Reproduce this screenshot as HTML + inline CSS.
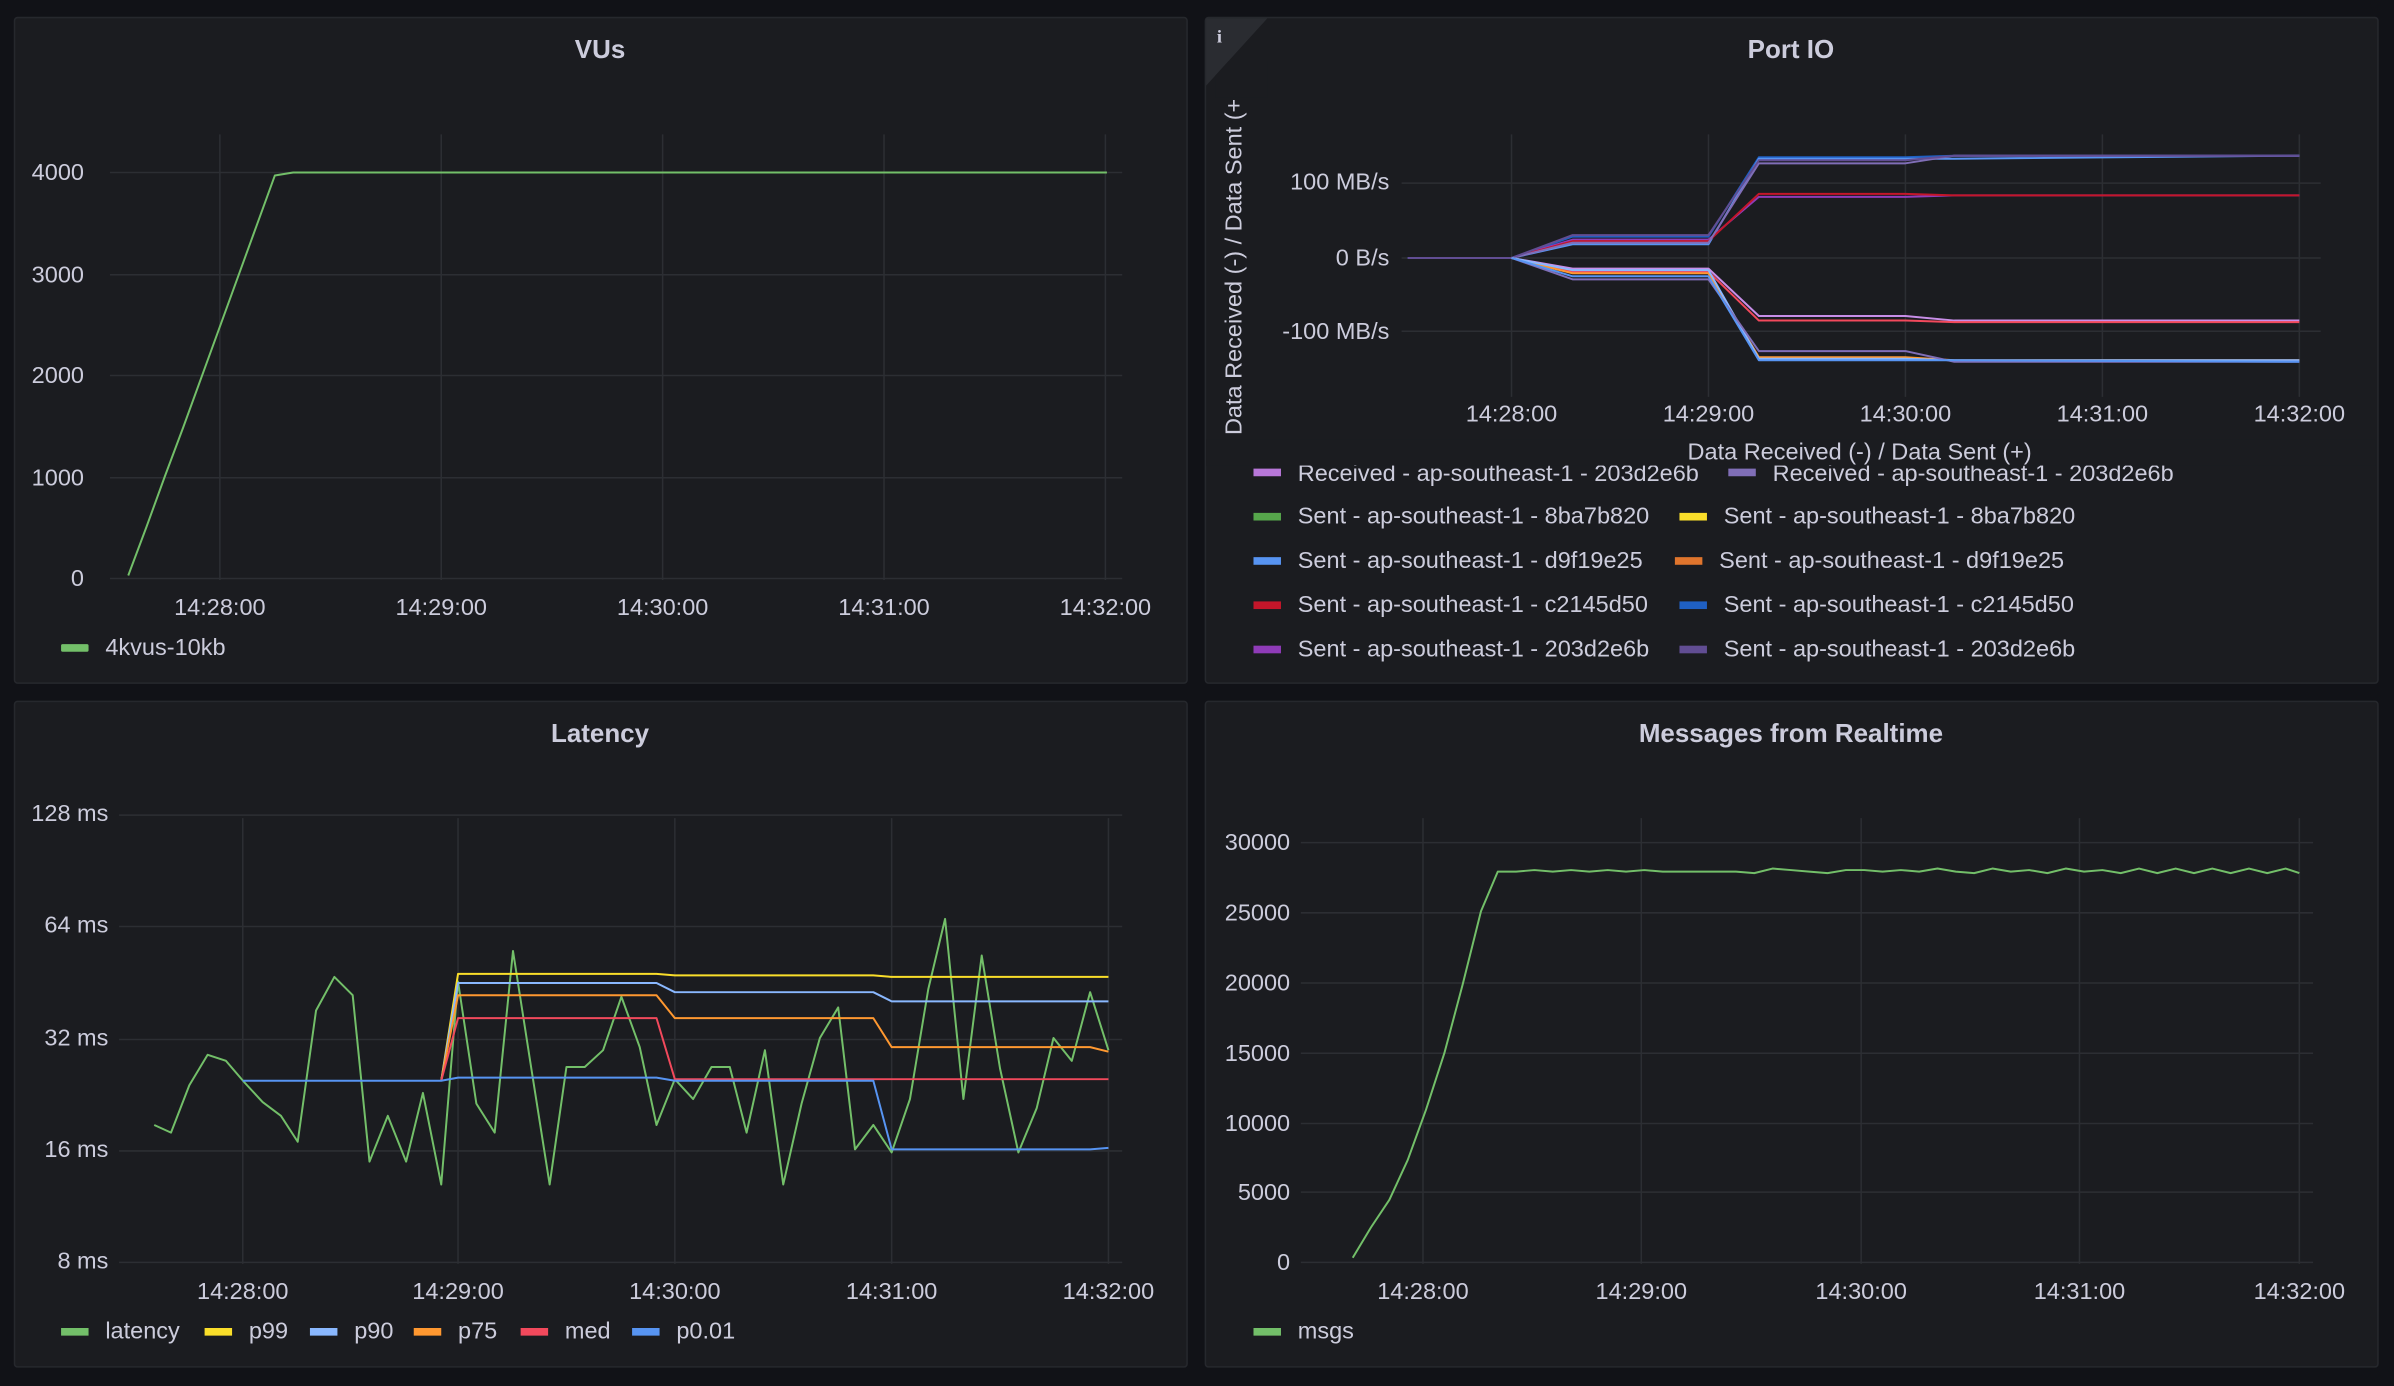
<!DOCTYPE html>
<html><head><meta charset="utf-8"><style>
html,body{margin:0;padding:0;background:#111217;}
svg{display:block}
text{font-family:"Liberation Sans",sans-serif;fill:#ccccdc;}
.t{font-size:17px;font-weight:bold;text-anchor:middle}
.a{font-size:15.4px}
.r{text-anchor:end}
.m{text-anchor:middle}
.g{stroke:#2c2e33;stroke-width:1;fill:none}
.l{fill:none;stroke-width:1.3;stroke-linejoin:round}
</style></head><body>
<svg width="2394" height="1386" viewBox="0 0 1568 908" preserveAspectRatio="none" xmlns="http://www.w3.org/2000/svg">
<rect width="1568" height="908" fill="#111217"/>
<g fill="#1b1c20" stroke="#26282d">
<rect x="9.5" y="11.5" width="768" height="436" rx="2"/>
<rect x="789.5" y="11.5" width="768" height="436" rx="2"/>
<rect x="9.5" y="459.5" width="768" height="436" rx="2"/>
<rect x="789.5" y="459.5" width="768" height="436" rx="2"/>
</g>

<!-- VUs -->
<text class="t" x="393" y="38">VUs</text>
<g class="g">
<path d="M144 88V380M289 88V380M434 88V380M579 88V380M724 88V380"/>
<path d="M72 113H735M72 180H735M72 246H735M72 313H735M72 379H735"/>
</g>
<g class="a">
<text class="r" x="55" y="118">4000</text><text class="r" x="55" y="185">3000</text>
<text class="r" x="55" y="251">2000</text><text class="r" x="55" y="318">1000</text>
<text class="r" x="55" y="384">0</text>
<text class="m" x="144" y="403">14:28:00</text><text class="m" x="289" y="403">14:29:00</text>
<text class="m" x="434" y="403">14:30:00</text><text class="m" x="579" y="403">14:31:00</text>
<text class="m" x="724" y="403">14:32:00</text>
</g>
<path class="l" stroke="#73bf69" d="M84 377L96 345L108 312L120 280L132 247L144 214L156 181L168 148L180 115L192 113L725 113"/>
<rect x="40" y="422" width="18" height="5" rx="1" fill="#73bf69"/>
<text class="a" x="69" y="429">4kvus-10kb</text>

<!-- Port IO -->
<path d="M790 12H830L790 56Z" fill="#2a2c31"/>
<text x="797" y="28" style="font-size:12px;font-weight:bold;font-family:'Liberation Serif',serif">i</text>
<text class="t" x="1173" y="38">Port IO</text>
<g class="g">
<path d="M990 88V260M1119 88V260M1248 88V260M1377 88V260M1506 88V260"/>
<path d="M918 120H1520M918 169H1520M918 217H1520"/>
</g>
<g class="a">
<text class="r" x="910" y="124">100 MB/s</text><text class="r" x="910" y="174">0 B/s</text>
<text class="r" x="910" y="222">-100 MB/s</text>
<text class="m" x="990" y="276">14:28:00</text><text class="m" x="1119" y="276">14:29:00</text>
<text class="m" x="1248" y="276">14:30:00</text><text class="m" x="1377" y="276">14:31:00</text>
<text class="m" x="1506" y="276">14:32:00</text>
<text transform="translate(813,285) rotate(-90)">Data Received (-) / Data Sent (+</text>
</g>
<rect x="796" y="40" width="34" height="24" fill="#1b1c20"/>
<path d="M790 12H830L790 56Z" fill="#2a2c31"/>
<text x="797" y="28" style="font-size:12px;font-weight:bold;font-family:'Liberation Serif',serif">i</text>
<g class="l">
<path stroke="#1f60c4" d="M922 169H990L1030 155H1119L1152 103H1248L1280 102H1506"/>
<path stroke="#5794f2" d="M990 169L1030 160H1119L1152 104H1280L1506 102"/>
<path stroke="#8f3bb8" d="M990 169L1030 157H1119L1152 129H1248L1280 128H1506"/>
<path stroke="#c4162a" d="M990 169L1030 158H1119L1152 127H1248L1280 128H1506"/>
<path stroke="#806eb7" d="M990 169L1030 159H1119L1152 107H1248L1280 102H1506"/>
<path stroke="#614d93" d="M922 169H990L1030 154H1119L1152 105H1248L1280 102H1506"/>
<path stroke="#c88ee8" d="M990 169L1030 176H1119L1152 207H1248L1280 210H1506"/>
<path stroke="#f2495c" d="M990 169L1030 178H1119L1152 210H1248L1280 211H1506"/>
<path stroke="#ff9830" d="M990 169L1030 179H1119L1152 234H1248L1280 236H1506"/>
<path stroke="#8ab8ff" d="M990 169L1030 177H1119L1152 235H1248L1280 236H1506"/>
<path stroke="#806eb7" d="M990 169L1030 183H1119L1152 230H1248L1280 237H1506"/>
<path stroke="#5794f2" d="M990 169L1030 181H1119L1152 236H1280L1506 237"/>
</g>
<g class="a">
<rect x="821" y="307" width="18" height="5" fill="#b877d9"/><text x="850" y="315">Received - ap-southeast-1 - 203d2e6b</text>
<rect x="1132" y="307" width="18" height="5" fill="#806eb7"/><text x="1161" y="315">Received - ap-southeast-1 - 203d2e6b</text>
<rect x="821" y="336" width="18" height="5" fill="#56a64b"/><text x="850" y="343">Sent - ap-southeast-1 - 8ba7b820</text>
<rect x="1100" y="336" width="18" height="5" fill="#fade2a"/><text x="1129" y="343">Sent - ap-southeast-1 - 8ba7b820</text>
<rect x="821" y="365" width="18" height="5" fill="#5794f2"/><text x="850" y="372">Sent - ap-southeast-1 - d9f19e25</text>
<rect x="1097" y="365" width="18" height="5" fill="#e0752d"/><text x="1126" y="372">Sent - ap-southeast-1 - d9f19e25</text>
<rect x="821" y="394" width="18" height="5" fill="#c4162a"/><text x="850" y="401">Sent - ap-southeast-1 - c2145d50</text>
<rect x="1100" y="394" width="18" height="5" fill="#1f60c4"/><text x="1129" y="401">Sent - ap-southeast-1 - c2145d50</text>
<rect x="821" y="423" width="18" height="5" fill="#8f3bb8"/><text x="850" y="430">Sent - ap-southeast-1 - 203d2e6b</text>
<rect x="1100" y="423" width="18" height="5" fill="#614d93"/><text x="1129" y="430">Sent - ap-southeast-1 - 203d2e6b</text>
</g>
<rect x="790" y="288" width="766" height="17" fill="#1b1c20"/>
<text class="a m" x="1218" y="301">Data Received (-) / Data Sent (+)</text>

<!-- Latency -->
<text class="t" x="393" y="486">Latency</text>
<g class="g">
<path d="M159 536V828M300 536V828M442 536V828M584 536V828M726 536V828"/>
<path d="M78 534H735M78 607H735M78 681H735M78 754H735M78 827H735"/>
</g>
<g class="a">
<text class="r" x="71" y="538">128 ms</text><text class="r" x="71" y="611">64 ms</text>
<text class="r" x="71" y="685">32 ms</text><text class="r" x="71" y="758">16 ms</text>
<text class="r" x="71" y="831">8 ms</text>
<text class="m" x="159" y="851">14:28:00</text><text class="m" x="300" y="851">14:29:00</text>
<text class="m" x="442" y="851">14:30:00</text><text class="m" x="584" y="851">14:31:00</text>
<text class="m" x="726" y="851">14:32:00</text>
</g>
<g class="l">
<path stroke="#73bf69" d="M101 737L112 742L124 711L136 691L148 695L160 709L172 722L184 731L195 748L207 662L219 640L231 652L242 761L254 731L266 761L277 716L289 776L300 643L312 723L324 742L336 623L348 700L360 776L371 699L383 699L395 688L407 653L419 686L430 737L442 707L454 720L466 699L478 699L489 742L501 688L513 776L525 723L537 680L549 660L560 753L572 737L584 755L596 720L608 648L619 602L631 720L643 626L655 700L667 755L679 726L690 680L702 695L714 650L726 688"/>
<path stroke="#fade2a" d="M289 708L300 638H430L442 639H572L584 640H726"/>
<path stroke="#8ab8ff" d="M289 708L300 644H430L442 650H572L584 656H726"/>
<path stroke="#ff9830" d="M289 708L300 652H430L442 667H572L584 686H714L726 689"/>
<path stroke="#f2495c" d="M289 708L300 667H430L442 707H726"/>
<path stroke="#5794f2" d="M159 708H289L300 706H430L442 708H572L584 753H714L726 752"/>
</g>
<g class="a">
<rect x="40" y="870" width="18" height="5" fill="#73bf69"/><text x="69" y="877">latency</text>
<rect x="134" y="870" width="18" height="5" fill="#fade2a"/><text x="163" y="877">p99</text>
<rect x="203" y="870" width="18" height="5" fill="#8ab8ff"/><text x="232" y="877">p90</text>
<rect x="271" y="870" width="18" height="5" fill="#ff9830"/><text x="300" y="877">p75</text>
<rect x="341" y="870" width="18" height="5" fill="#f2495c"/><text x="370" y="877">med</text>
<rect x="414" y="870" width="18" height="5" fill="#5794f2"/><text x="443" y="877">p0.01</text>
</g>

<!-- Messages -->
<text class="t" x="1173" y="486">Messages from Realtime</text>
<g class="g">
<path d="M932 536V828M1075 536V828M1219 536V828M1362 536V828M1506 536V828"/>
<path d="M852 552H1515M852 598H1515M852 644H1515M852 690H1515M852 736H1515M852 781H1515M852 827H1515"/>
</g>
<g class="a">
<text class="r" x="845" y="557">30000</text><text class="r" x="845" y="603">25000</text>
<text class="r" x="845" y="649">20000</text><text class="r" x="845" y="695">15000</text>
<text class="r" x="845" y="741">10000</text><text class="r" x="845" y="786">5000</text>
<text class="r" x="845" y="832">0</text>
<text class="m" x="932" y="851">14:28:00</text><text class="m" x="1075" y="851">14:29:00</text>
<text class="m" x="1219" y="851">14:30:00</text><text class="m" x="1362" y="851">14:31:00</text>
<text class="m" x="1506" y="851">14:32:00</text>
</g>
<path class="l" stroke="#73bf69" d="M886 824L898 804L910 786L922 760L934 727L946 690L958 645L970 597L981 571L993 571L1005 570L1017 571L1029 570L1041 571L1053 570L1065 571L1077 570L1089 571L1101 571L1113 571L1125 571L1137 571L1149 572L1161 569L1173 570L1185 571L1197 572L1209 570L1221 570L1233 571L1245 570L1257 571L1269 569L1281 571L1293 572L1305 569L1317 571L1329 570L1341 572L1353 569L1365 571L1377 570L1389 572L1401 569L1413 572L1425 569L1437 572L1449 569L1461 572L1473 569L1485 572L1497 569L1506 572"/>
<rect x="821" y="870" width="18" height="5" fill="#73bf69"/><text class="a" x="850" y="877">msgs</text>
</svg>
</body></html>
